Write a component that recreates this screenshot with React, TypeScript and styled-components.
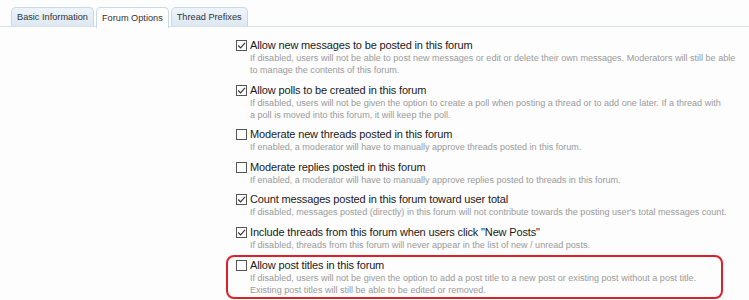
import React from "react";
import styled, { createGlobalStyle } from "styled-components";

const GlobalStyle = createGlobalStyle`
  html, body {
    margin: 0;
    padding: 0;
    background: #fdfdfd;
  }
  body {
    font-family: "Liberation Sans", Arial, sans-serif;
    color: #222;
  }
`;

const Page = styled.div`
  width: 749px;
  height: 300px;
  overflow: hidden;
`;

const TabBar = styled.ul`
  display: flex;
  gap: 2px;
  margin: 0;
  padding: 7px 0 0 11px;
  list-style: none;
  border-bottom: 1px solid #d3dfea;
  height: 19px;
`;

const Tab = styled.li<{ $active?: boolean }>`
  display: flex;
  align-items: center;
  padding: 0 5px;
  height: ${(p) => (p.$active ? "20px" : "18px")};
  font-size: 9.2px;
  color: #333;
  border: 1px solid #c9d8e6;
  border-bottom: none;
  border-radius: 5px 5px 0 0;
  background: ${(p) =>
    p.$active ? "#fdfdfd" : "linear-gradient(#eef4fa, #dde8f2)"};
`;

const Options = styled.div`
  display: flex;
  flex-direction: column;
  align-items: flex-start;
  padding: 8px 0 0 226px;
`;

const Option = styled.div<{ $highlight?: boolean }>`
  box-sizing: border-box;
  display: flex;
  gap: 3px;
  width: ${(p) => (p.$highlight ? "497px" : "auto")};
  padding: 1px 6px 1.6px 8px;
  border: 2px solid ${(p) => (p.$highlight ? "#d8232a" : "transparent")};
  border-radius: 8px;
`;

const Box = styled.span`
  box-sizing: border-box;
  flex: none;
  width: 11px;
  height: 11px;
  margin-top: 2px;
  border: 1px solid #555;
  background: #fff;
  display: flex;
  align-items: center;
  justify-content: center;
`;

const Text = styled.div`
  display: flex;
  flex-direction: column;
  flex: 1;
  max-width: 490px;
`;

const Label = styled.div`
  font-size: 11px;
  letter-spacing: -0.15px;
  line-height: 14px;
  color: #1a1a1a;
`;

const Hint = styled.div`
  font-size: 9.05px;
  line-height: 12px;
  color: #9a9a9a;
`;

const Check = () => (
  <svg width="9" height="9" viewBox="0 0 9 9">
    <path d="M1.2 4.5 L3.6 6.9 L8 1.8" fill="none" stroke="#333" strokeWidth="1.1" />
  </svg>
);

const options = [
  {
    label: "Allow new messages to be posted in this forum",
    hint:
      "If disabled, users will not be able to post new messages or edit or delete their own messages. Moderators will still be able to manage the contents of this forum.",
    checked: true,
  },
  {
    label: "Allow polls to be created in this forum",
    hint:
      "If disabled, users will not be given the option to create a poll when posting a thread or to add one later. If a thread with a\u00a0poll is moved into this forum, it will keep the poll.",
    checked: true,
  },
  {
    label: "Moderate new threads posted in this forum",
    hint: "If enabled, a moderator will have to manually approve threads posted in this forum.",
    checked: false,
  },
  {
    label: "Moderate replies posted in this forum",
    hint: "If enabled, a moderator will have to manually approve replies posted to threads in this forum.",
    checked: false,
  },
  {
    label: "Count messages posted in this forum toward user total",
    hint:
      "If disabled, messages posted (directly) in this forum will not contribute towards the posting user's total messages count.",
    checked: true,
  },
  {
    label: 'Include threads from this forum when users click "New Posts"',
    hint: "If disabled, threads from this forum will never appear in the list of new / unread posts.",
    checked: true,
  },
  {
    label: "Allow post titles in this forum",
    hint:
      "If disabled, users will not be given the option to add a post title to a new post or existing post without a post title. Existing post titles will still be able to be edited or removed.",
    checked: false,
    highlight: true,
  },
];

export default function App() {
  return (
    <Page>
      <GlobalStyle />
      <TabBar>
        <Tab>Basic Information</Tab>
        <Tab $active>Forum Options</Tab>
        <Tab>Thread Prefixes</Tab>
      </TabBar>
      <Options>
        {options.map((o) => (
          <Option key={o.label} $highlight={o.highlight}>
            <Box>{o.checked && <Check />}</Box>
            <Text>
              <Label>{o.label}</Label>
              <Hint>{o.hint}</Hint>
            </Text>
          </Option>
        ))}
      </Options>
    </Page>
  );
}
